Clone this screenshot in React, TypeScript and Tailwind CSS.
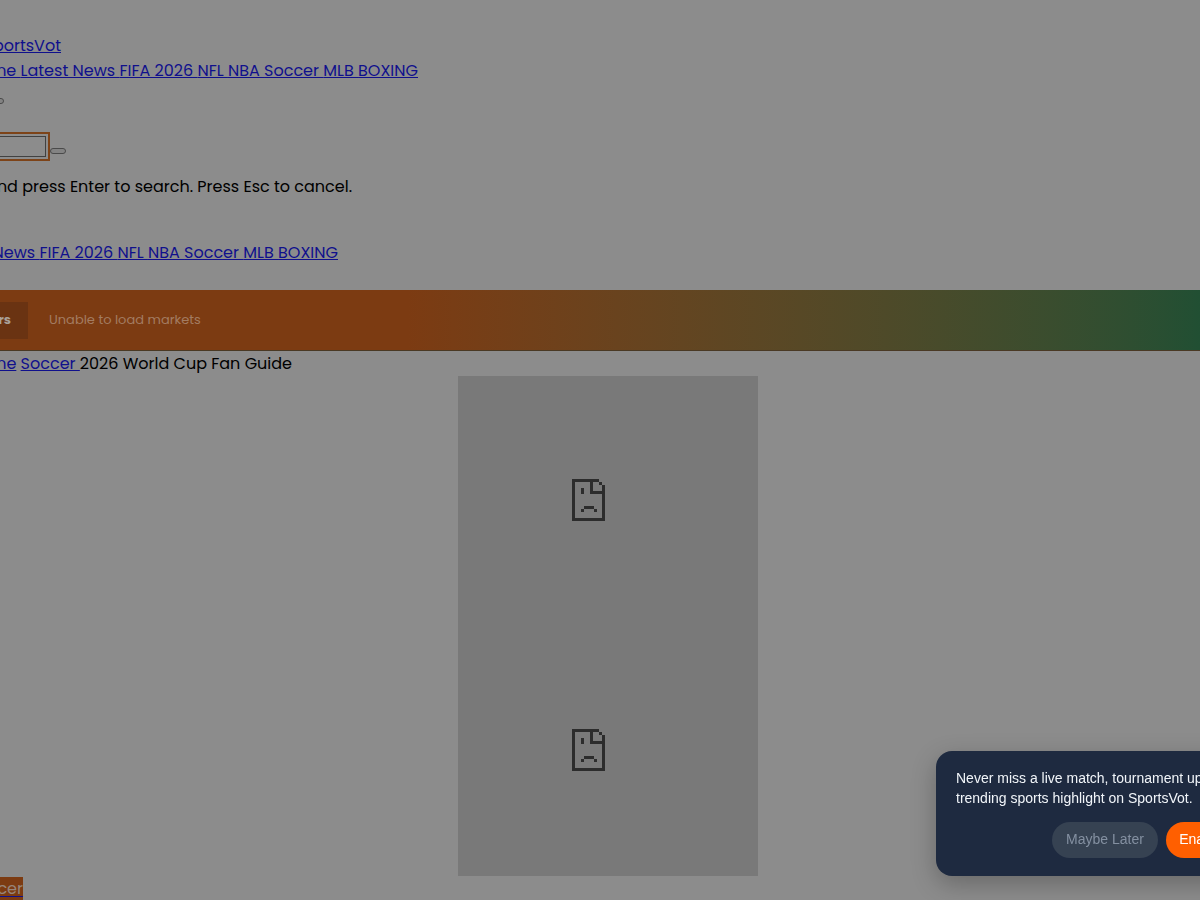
function SadPage() {
  return (
    <svg width="33" height="42" viewBox="0 0 33 42" fill="#2c2c2c" shapeRendering="crispEdges" aria-hidden="true">
      <path d="M0 0H27V3H21V12H30V6H33V42H0ZM3 3V39H30V15H18V3Z" fillRule="evenodd" />
      <path d="M27 3h3v3h-3zM9 9h3v6H9zM12 27h10v3H12zM9 30h3v3H9zM22 30h3v3h-3z" />
    </svg>
  );
}

const link = "text-[#10108c] underline underline-offset-1";

function NavLinks({ names }: { names: string[] }) {
  return (
    <>
      {names.map((name) => (
        <a key={name} href="#" className={link}>
          {name + " "}
        </a>
      ))}
    </>
  );
}

const sports = ["Latest News", "FIFA 2026", "NFL", "NBA", "Soccer", "MLB", "BOXING"];

export default function App() {
  return (
    <div className="min-h-screen overflow-hidden bg-[#8c8c8c] font-[Poppins,Inter,sans-serif] text-base leading-[25px] whitespace-nowrap text-black">
      <header className="pt-[33px]">
        <div className="flex w-[61px] justify-end">
          <a href="#" className={link}>SportsVot</a>
        </div>
        <nav className="flex w-[418px] justify-end">
          <div><NavLinks names={["Home", ...sports]} /></div>
        </nav>
        <div className="flex h-[49px] w-1 justify-end pt-[15px]">
          <button aria-label="Menu" className="h-[6px] w-4 shrink-0 rounded-[3px] border border-[#4a4a4a] bg-[#838383]" />
        </div>
        <form className="flex h-[29px] w-[66px] items-center justify-end" onSubmit={(e) => e.preventDefault()}>
          <input
            type="search"
            aria-label="Search"
            className="mr-1 h-[21px] w-40 shrink-0 rounded-none border border-[#414141] bg-[#8c8c8c] text-sm outline-2 outline-offset-2 outline-[#7d4318]"
          />
          <button aria-label="Submit search" className="mt-[9px] h-[6px] w-4 shrink-0 rounded-[3px] border border-[#4a4a4a] bg-[#838383]" />
        </form>
        <p className="mt-[13px] flex w-[352px] justify-end">Type and press Enter to search. Press Esc to cancel.</p>
      </header>
      <nav className="mt-[41px] flex w-[338px] justify-end">
        <div><NavLinks names={sports} /></div>
      </nav>
      <section className="mt-[25px] flex h-[61px] items-center gap-[21px] border-b border-[#4a3924] bg-linear-to-r from-[#7c3b12] from-[34%] to-[#214f33] text-[13px]">
        <div className="flex h-[37px] w-7 justify-end bg-[#6a3312] pr-[17px] leading-[35px] font-bold text-[#aaa19a]">Movers</div>
        <span className="pb-0.5 text-[#a37b61]">Unable to load markets</span>
      </section>
      <div className="flex w-[292px] justify-end">
        <div>
          <a href="#" className={link}>Home</a> <a href="#" className={link}>{"Soccer "}</a>2026 World Cup Fan Guide
        </div>
      </div>
      <main>
        <div className="flex justify-center pl-4">
          <div className="w-[300px] bg-[#797979] pr-10">
            <div className="flex h-[250px] items-center justify-center pb-0.5"><SadPage /></div>
            <div className="flex h-[250px] items-center justify-center pb-0.5"><SadPage /></div>
          </div>
        </div>
        <div className="mt-px flex h-[23px] w-[23px] justify-end bg-[#7c3b12] leading-[23px]">
          <a href="#" className="text-[#97857a] underline decoration-[#10108c] underline-offset-2">Soccer</a>
        </div>
      </main>
      <aside className="fixed right-[-56px] bottom-6 w-80 rounded-2xl bg-[#1e2a40] px-5 pt-[17px] pb-[18px] font-['Liberation_Sans',sans-serif] text-sm leading-5 text-[#f1f5f9] shadow-[0_8px_24px_rgba(0,0,0,0.25)]">
        <p>
          Never miss a live match, tournament update, or
          <br />
          trending sports highlight on SportsVot.
        </p>
        <div className="mt-[14px] flex justify-end gap-2">
          <button className="h-9 w-[106px] shrink-0 rounded-full bg-[#364252] pb-0.5 text-[#8490a1]">Maybe Later</button>
          <button className="h-9 w-[70px] shrink-0 rounded-full bg-[#ff5f00] pb-0.5 text-white">Enable</button>
        </div>
      </aside>
    </div>
  );
}
